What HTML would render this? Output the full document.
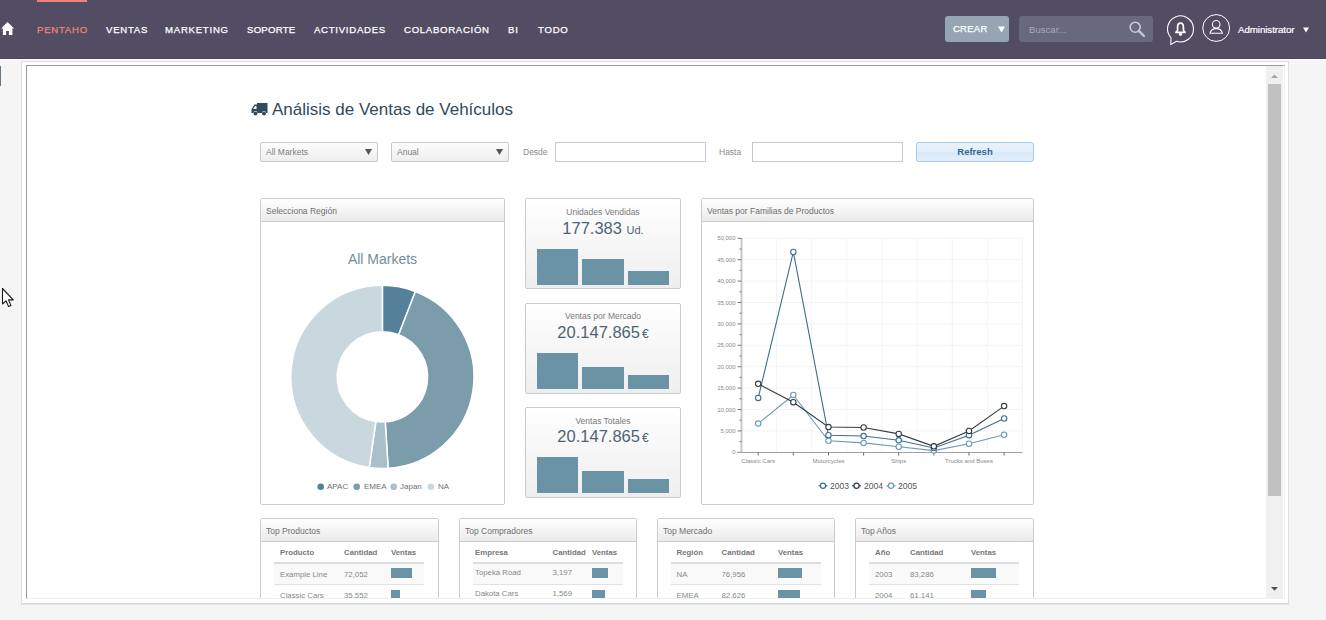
<!DOCTYPE html>
<html><head><meta charset="utf-8">
<style>
*{margin:0;padding:0;box-sizing:border-box}
html,body{width:1326px;height:620px;overflow:hidden;background:#f5f5f5;font-family:"Liberation Sans",sans-serif}
.abs{position:absolute}
#nav{position:absolute;left:0;top:0;width:1326px;height:59px;background:#534d64;border-bottom:1px solid #4b455b}
#wl{position:absolute;left:0;top:59px;width:1326px;height:1px;background:#fff}
.ni{position:absolute;top:24.2px;font-size:9.6px;-webkit-text-stroke:0.25px currentColor;color:#fff;letter-spacing:0.75px;white-space:nowrap;line-height:12px}
#outer{position:absolute;left:21px;top:61px;width:1268px;height:543px;background:#fff;border:1px solid #dedede;border-bottom-color:#cdd9e3;box-shadow:0 1px 0 #e4e4e4}
#frame{position:absolute;left:26px;top:65px;width:1259px;height:534px;border-top:1px solid #999;border-left:1px solid #999;border-right:1px solid #f0f0f0;border-bottom:1px solid #f0f0f0;background:#fff}

.sel{position:absolute;top:142px;height:20px;border:1px solid #c9c9c9;border-radius:2px;background:linear-gradient(#fdfdfd,#eeeeee)}
.sel span{position:absolute;left:5px;top:4px;font-size:8.5px;line-height:10px;color:#808080}
.sel svg{position:absolute;right:5px;top:6px}
.inp{position:absolute;top:142px;height:20px;border:1px solid #c9c9c9;background:#fff}
.lbl{position:absolute;top:147px;font-size:8.5px;line-height:10px;color:#8a8a8a}
.pan{position:absolute;border:1px solid #cdcdcd;border-radius:2px;background:#fff}
.ph{position:absolute;left:0;top:0;right:0;height:23px;border-bottom:1px solid #cdcdcd;background:linear-gradient(#ffffff,#ebebeb)}
.ph span{position:absolute;left:5px;top:7px;font-size:8.5px;line-height:10px;color:#6f6f6f;white-space:nowrap}
.kpi{position:absolute;left:525px;width:156px;height:91px;border:1px solid #cdcdcd;border-radius:2px;background:linear-gradient(#ffffff,#eeeeee)}
.kt{position:absolute;left:0;width:154px;text-align:center;font-size:8.5px;line-height:10px;color:#7a7a7a;white-space:nowrap}
.kv{position:absolute;left:0;width:154px;text-align:center;font-size:16.5px;line-height:18px;color:#4f6374;white-space:nowrap}
.kv small{font-size:11px}
.bar{position:absolute;background:#6b93a6}

.lg{top:482px;font-size:8px;line-height:10px;color:#707070}
.yl{left:700px;width:35.5px;text-align:right;font-size:6px;line-height:8px;color:#8a8a8a}
.xl{top:457px;width:60px;text-align:center;font-size:6px;line-height:8px;color:#8a8a8a;white-space:nowrap}
.cl{top:481px;font-size:8.6px;line-height:10px;color:#555}

.th{position:absolute;top:548px;font-size:7.8px;line-height:10px;font-weight:bold;color:#777;white-space:nowrap}
.td{position:absolute;font-size:7.8px;line-height:10px;color:#888;white-space:nowrap}
.tb{position:absolute;height:2px;top:562px;background:#dddddd}
.tr{position:absolute;height:21px;top:564px;background:#f9f9f9;border-bottom:1px solid #e2e2e2}
</style></head><body>
<div id="nav">
  <div class="abs" style="left:37px;top:0;width:50px;height:2px;background:#f08377"></div>
  <svg class="abs" style="left:1px;top:21px" width="14" height="15" viewBox="0 0 14 15"><path d="M6.5 0.9 L13.1 7.4 L11.4 7.4 L11.4 14.1 L7.9 14.1 L7.9 10.1 L5.1 10.1 L5.1 14.1 L1.9 14.1 L1.9 7.4 L0.1 7.4 Z" fill="#fff"/></svg>
  <div class="ni" style="left:37px;color:#f08377">PENTAHO</div>
  <div class="ni" style="left:106px">VENTAS</div>
  <div class="ni" style="left:165px">MARKETING</div>
  <div class="ni" style="left:247px;letter-spacing:0.25px">SOPORTE</div>
  <div class="ni" style="left:314px;letter-spacing:0.72px">ACTIVIDADES</div>
  <div class="ni" style="left:404px;letter-spacing:0.7px">COLABORACIÓN</div>
  <div class="ni" style="left:508px">BI</div>
  <div class="ni" style="left:538px">TODO</div>
  <div class="abs" style="left:945px;top:16px;width:64px;height:26px;background:#95a5b4;border-radius:3px"></div>
  <div class="ni" style="left:953px;top:23px;font-size:9.5px;letter-spacing:0.25px">CREAR</div>
  <svg class="abs" style="left:998px;top:26px" width="7" height="7" viewBox="0 0 7 7"><path d="M0 0.5 L7 0.5 L3.5 6.5 Z" fill="#fff"/></svg>
  <div class="abs" style="left:1019px;top:16px;width:134px;height:26px;background:#676a7c;border-radius:3px"></div>
  <div class="abs" style="left:1029px;top:24px;color:#a9a9b8;font-size:9.6px;line-height:12px">Buscar...</div>
  <svg class="abs" style="left:1128px;top:20px" width="20" height="20" viewBox="0 0 20 20"><circle cx="7.2" cy="7.2" r="5" fill="none" stroke="#c9c9d2" stroke-width="1.6"/><path d="M10.8 10.8 L16 16" stroke="#c9c9d2" stroke-width="2.4" stroke-linecap="round"/></svg>
  <svg class="abs" style="left:1164px;top:12px" width="34" height="36" viewBox="0 0 34 36"><path d="M12.48 29.26 A13 13 0 1 0 7.0 25.77 L6.8 32.6 Z" fill="none" stroke="#fff" stroke-width="1.1" stroke-linejoin="round"/><path d="M16.5 11.2 C14.5 11.2 13.6 12.9 13.6 15 L13.6 18.3 L11.9 20.3 L21.1 20.3 L19.4 18.3 L19.4 15 C19.4 12.9 18.5 11.2 16.5 11.2 Z" fill="none" stroke="#fff" stroke-width="1.7" stroke-linejoin="round"/><path d="M14.9 21.3 L18.1 21.3 L18.1 22.2 A1.6 1.6 0 0 1 14.9 22.2 Z" fill="#fff"/></svg>
  <svg class="abs" style="left:1200px;top:12px" width="32" height="32" viewBox="0 0 32 32"><circle cx="16.2" cy="16" r="13.4" fill="none" stroke="#fff" stroke-width="1"/><circle cx="16.2" cy="12.3" r="3.8" fill="none" stroke="#fff" stroke-width="1.1"/><path d="M10 21.3 C10.7 17.8 13.1 16.6 16.2 16.6 C19.3 16.6 21.7 17.8 22.4 21.3 Z" fill="none" stroke="#fff" stroke-width="1.1"/></svg>
  <div class="abs" style="left:1238px;top:24px;color:#fff;font-size:9.8px;line-height:12px;letter-spacing:-0.1px;-webkit-text-stroke:0.2px #fff">Administrator</div>
  <svg class="abs" style="left:1303px;top:27px" width="6" height="6" viewBox="0 0 6 6"><path d="M0 0.5 L6 0.5 L3 5.5 Z" fill="#fff"/></svg>
</div>
<div class="abs" style="left:0;top:66px;width:1px;height:20px;background:#667886"></div>
<div id="wl"></div>
<div id="outer"></div>
<div id="frame"></div>
<div id="clip" style="position:absolute;left:27px;top:66px;width:1239px;height:532px;overflow:hidden">
<div id="inner" style="position:absolute;left:-27px;top:-66px;width:1326px;height:620px">
  <svg class="abs" style="left:251px;top:102px" width="17" height="14" viewBox="0 0 17 14"><path d="M0.5 7 L3.5 2.5 L6 2.5 L6 1 L16.5 1 L16.5 11 L15 11 A2 2 0 0 0 11 11 L6.5 11 A2 2 0 0 0 2.5 11 L0.5 11 Z M2 7 L4.2 4 L5.5 4 L5.5 7 Z" fill="#2f4b5c" fill-rule="evenodd"/><circle cx="4.5" cy="11.5" r="1.9" fill="#2f4b5c"/><circle cx="13" cy="11.5" r="1.9" fill="#2f4b5c"/></svg>
  <div class="abs" style="left:272px;top:100px;font-size:17px;line-height:20px;color:#2f4b5c;white-space:nowrap">Análisis de Ventas de Vehículos</div>

  <div class="sel" style="left:260px;width:118px"><span>All Markets</span><svg width="7" height="6" viewBox="0 0 7 6"><path d="M0 0 L7 0 L3.5 6 Z" fill="#555"/></svg></div>
  <div class="sel" style="left:391px;width:118px"><span>Anual</span><svg width="7" height="6" viewBox="0 0 7 6"><path d="M0 0 L7 0 L3.5 6 Z" fill="#555"/></svg></div>
  <div class="lbl" style="left:523px">Desde</div>
  <div class="inp" style="left:555px;width:151px"></div>
  <div class="lbl" style="left:719px">Hasta</div>
  <div class="inp" style="left:752px;width:151px"></div>
  <div class="abs" style="left:916px;top:142px;width:118px;height:20px;border:1px solid #a9c9e6;border-radius:3px;background:linear-gradient(#e8f2fc 0%,#e2eefa 50%,#d9e9f8 52%,#e4f0fb 100%);text-align:center;font-size:9.5px;line-height:18px;font-weight:bold;color:#2f6898">Refresh</div>

  <div class="pan" style="left:260px;top:198px;width:245px;height:307px">
    <div class="ph"><span>Selecciona Región</span></div>
  </div>
  <div class="abs" style="left:260px;top:251px;width:245px;text-align:center;font-size:14px;line-height:16px;color:#6f8ea3">All Markets</div>
<svg class="abs" style="left:0;top:0" width="1326" height="620" viewBox="0 0 1326 620"><path d="M382.40 285.30 A91.6 91.6 0 0 1 415.38 291.44 L398.67 334.73 A45.2 45.2 0 0 0 382.40 331.70 Z" fill="#56819a" stroke="#fff" stroke-width="1.5" stroke-linejoin="round"/><path d="M415.38 291.44 A91.6 91.6 0 0 1 388.15 468.32 L385.24 422.01 A45.2 45.2 0 0 0 398.67 334.73 Z" fill="#7a9cab" stroke="#fff" stroke-width="1.5" stroke-linejoin="round"/><path d="M388.15 468.32 A91.6 91.6 0 0 1 369.18 467.54 L375.88 421.63 A45.2 45.2 0 0 0 385.24 422.01 Z" fill="#a9bfca" stroke="#fff" stroke-width="1.5" stroke-linejoin="round"/><path d="M369.18 467.54 A91.6 91.6 0 0 1 382.40 285.30 L382.40 331.70 A45.2 45.2 0 0 0 375.88 421.63 Z" fill="#c9d8df" stroke="#fff" stroke-width="1.5" stroke-linejoin="round"/><circle cx="320.7" cy="486.8" r="3.3" fill="#56819a"/><circle cx="356.7" cy="486.8" r="3.3" fill="#7a9cab"/><circle cx="393.7" cy="486.8" r="3.3" fill="#a9bfca"/><circle cx="431" cy="486.8" r="3.3" fill="#c9d8df"/></svg><div class="abs lg" style="left:327px">APAC</div><div class="abs lg" style="left:364px">EMEA</div><div class="abs lg" style="left:400px">Japan</div><div class="abs lg" style="left:438px">NA</div>

  <div class="kpi" style="top:198px"><div class="kt" style="top:206px;top:8px">Unidades Vendidas</div><div class="kv" style="top:20px">177.383 <small>Ud.</small></div></div>
  <div class="bar" style="left:537px;top:249px;width:41px;height:36px"></div>
  <div class="bar" style="left:582px;top:259px;width:42px;height:26px"></div>
  <div class="bar" style="left:628px;top:271px;width:41px;height:14px"></div>

  <div class="kpi" style="top:303px"><div class="kt" style="top:7px">Ventas por Mercado</div><div class="kv" style="top:18.5px">20.147.865<small style="font-size:12px;margin-left:2px">€</small></div></div>
  <div class="bar" style="left:537px;top:353px;width:41px;height:36px"></div>
  <div class="bar" style="left:582px;top:367px;width:42px;height:22px"></div>
  <div class="bar" style="left:628px;top:375px;width:41px;height:14px"></div>

  <div class="kpi" style="top:407px"><div class="kt" style="top:8px">Ventas Totales</div><div class="kv" style="top:18.5px">20.147.865<small style="font-size:12px;margin-left:2px">€</small></div></div>
  <div class="bar" style="left:537px;top:457px;width:41px;height:36px"></div>
  <div class="bar" style="left:582px;top:471px;width:42px;height:22px"></div>
  <div class="bar" style="left:628px;top:479px;width:41px;height:14px"></div>

  <div class="pan" style="left:701px;top:198px;width:333px;height:307px">
    <div class="ph"><span>Ventas por Familias de Productos</span></div>
  </div>
<svg class="abs" style="left:0;top:0" width="1326" height="620" viewBox="0 0 1326 620"><line x1="741.5" y1="238.3" x2="1022.5" y2="238.3" stroke="#f4f4f4" stroke-width="1"/><line x1="741.5" y1="259.7" x2="1022.5" y2="259.7" stroke="#f4f4f4" stroke-width="1"/><line x1="741.5" y1="281.1" x2="1022.5" y2="281.1" stroke="#f4f4f4" stroke-width="1"/><line x1="741.5" y1="302.5" x2="1022.5" y2="302.5" stroke="#f4f4f4" stroke-width="1"/><line x1="741.5" y1="323.9" x2="1022.5" y2="323.9" stroke="#f4f4f4" stroke-width="1"/><line x1="741.5" y1="345.3" x2="1022.5" y2="345.3" stroke="#f4f4f4" stroke-width="1"/><line x1="741.5" y1="366.7" x2="1022.5" y2="366.7" stroke="#f4f4f4" stroke-width="1"/><line x1="741.5" y1="388.1" x2="1022.5" y2="388.1" stroke="#f4f4f4" stroke-width="1"/><line x1="741.5" y1="409.5" x2="1022.5" y2="409.5" stroke="#f4f4f4" stroke-width="1"/><line x1="741.5" y1="430.9" x2="1022.5" y2="430.9" stroke="#f4f4f4" stroke-width="1"/><line x1="776.6" y1="238.3" x2="776.6" y2="452" stroke="#f4f4f4" stroke-width="1"/><line x1="811.7" y1="238.3" x2="811.7" y2="452" stroke="#f4f4f4" stroke-width="1"/><line x1="846.8" y1="238.3" x2="846.8" y2="452" stroke="#f4f4f4" stroke-width="1"/><line x1="881.9" y1="238.3" x2="881.9" y2="452" stroke="#f4f4f4" stroke-width="1"/><line x1="917.0" y1="238.3" x2="917.0" y2="452" stroke="#f4f4f4" stroke-width="1"/><line x1="952.2" y1="238.3" x2="952.2" y2="452" stroke="#f4f4f4" stroke-width="1"/><line x1="987.3" y1="238.3" x2="987.3" y2="452" stroke="#f4f4f4" stroke-width="1"/><line x1="1022.4" y1="238.3" x2="1022.4" y2="452" stroke="#f4f4f4" stroke-width="1"/><line x1="741.5" y1="238" x2="741.5" y2="452.5" stroke="#c8c8c8" stroke-width="2"/><line x1="737.5" y1="238.3" x2="741.5" y2="238.3" stroke="#777" stroke-width="1"/><line x1="739.5" y1="249.0" x2="741.5" y2="249.0" stroke="#777" stroke-width="1"/><line x1="737.5" y1="259.7" x2="741.5" y2="259.7" stroke="#777" stroke-width="1"/><line x1="739.5" y1="270.4" x2="741.5" y2="270.4" stroke="#777" stroke-width="1"/><line x1="737.5" y1="281.1" x2="741.5" y2="281.1" stroke="#777" stroke-width="1"/><line x1="739.5" y1="291.8" x2="741.5" y2="291.8" stroke="#777" stroke-width="1"/><line x1="737.5" y1="302.5" x2="741.5" y2="302.5" stroke="#777" stroke-width="1"/><line x1="739.5" y1="313.2" x2="741.5" y2="313.2" stroke="#777" stroke-width="1"/><line x1="737.5" y1="323.9" x2="741.5" y2="323.9" stroke="#777" stroke-width="1"/><line x1="739.5" y1="334.6" x2="741.5" y2="334.6" stroke="#777" stroke-width="1"/><line x1="737.5" y1="345.3" x2="741.5" y2="345.3" stroke="#777" stroke-width="1"/><line x1="739.5" y1="356.0" x2="741.5" y2="356.0" stroke="#777" stroke-width="1"/><line x1="737.5" y1="366.7" x2="741.5" y2="366.7" stroke="#777" stroke-width="1"/><line x1="739.5" y1="377.4" x2="741.5" y2="377.4" stroke="#777" stroke-width="1"/><line x1="737.5" y1="388.1" x2="741.5" y2="388.1" stroke="#777" stroke-width="1"/><line x1="739.5" y1="398.8" x2="741.5" y2="398.8" stroke="#777" stroke-width="1"/><line x1="737.5" y1="409.5" x2="741.5" y2="409.5" stroke="#777" stroke-width="1"/><line x1="739.5" y1="420.2" x2="741.5" y2="420.2" stroke="#777" stroke-width="1"/><line x1="737.5" y1="430.9" x2="741.5" y2="430.9" stroke="#777" stroke-width="1"/><line x1="739.5" y1="441.6" x2="741.5" y2="441.6" stroke="#777" stroke-width="1"/><line x1="737.5" y1="452.3" x2="741.5" y2="452.3" stroke="#777" stroke-width="1"/><line x1="737.5" y1="452.5" x2="1022.5" y2="452.5" stroke="#a0a0a0" stroke-width="1.2"/><line x1="758.2" y1="452.5" x2="758.2" y2="455.5" stroke="#666" stroke-width="1"/><line x1="793.3" y1="452.5" x2="793.3" y2="455.5" stroke="#666" stroke-width="1"/><line x1="828.5" y1="452.5" x2="828.5" y2="455.5" stroke="#666" stroke-width="1"/><line x1="863.6" y1="452.5" x2="863.6" y2="455.5" stroke="#666" stroke-width="1"/><line x1="898.7" y1="452.5" x2="898.7" y2="455.5" stroke="#666" stroke-width="1"/><line x1="933.9" y1="452.5" x2="933.9" y2="455.5" stroke="#666" stroke-width="1"/><line x1="969.0" y1="452.5" x2="969.0" y2="455.5" stroke="#666" stroke-width="1"/><line x1="1004.1" y1="452.5" x2="1004.1" y2="455.5" stroke="#666" stroke-width="1"/><polyline points="758.20,423.62 793.33,394.95 828.46,440.74 863.59,442.88 898.72,446.74 933.85,450.59 968.98,443.74 1004.11,434.75" fill="none" stroke="#6a9cb3" stroke-width="1.1"/><circle cx="758.20" cy="423.62" r="2.7" fill="#fff" stroke="#6a9cb3" stroke-width="1.1"/><circle cx="793.33" cy="394.95" r="2.7" fill="#fff" stroke="#6a9cb3" stroke-width="1.1"/><circle cx="828.46" cy="440.74" r="2.7" fill="#fff" stroke="#6a9cb3" stroke-width="1.1"/><circle cx="863.59" cy="442.88" r="2.7" fill="#fff" stroke="#6a9cb3" stroke-width="1.1"/><circle cx="898.72" cy="446.74" r="2.7" fill="#fff" stroke="#6a9cb3" stroke-width="1.1"/><circle cx="933.85" cy="450.59" r="2.7" fill="#fff" stroke="#6a9cb3" stroke-width="1.1"/><circle cx="968.98" cy="443.74" r="2.7" fill="#fff" stroke="#6a9cb3" stroke-width="1.1"/><circle cx="1004.11" cy="434.75" r="2.7" fill="#fff" stroke="#6a9cb3" stroke-width="1.1"/><polyline points="758.20,397.94 793.33,252.00 828.46,435.18 863.59,436.04 898.72,440.32 933.85,448.02 968.98,435.18 1004.11,418.49" fill="none" stroke="#3e6f8b" stroke-width="1.1"/><circle cx="758.20" cy="397.94" r="2.7" fill="#fff" stroke="#3e6f8b" stroke-width="1.1"/><circle cx="793.33" cy="252.00" r="2.7" fill="#fff" stroke="#3e6f8b" stroke-width="1.1"/><circle cx="828.46" cy="435.18" r="2.7" fill="#fff" stroke="#3e6f8b" stroke-width="1.1"/><circle cx="863.59" cy="436.04" r="2.7" fill="#fff" stroke="#3e6f8b" stroke-width="1.1"/><circle cx="898.72" cy="440.32" r="2.7" fill="#fff" stroke="#3e6f8b" stroke-width="1.1"/><circle cx="933.85" cy="448.02" r="2.7" fill="#fff" stroke="#3e6f8b" stroke-width="1.1"/><circle cx="968.98" cy="435.18" r="2.7" fill="#fff" stroke="#3e6f8b" stroke-width="1.1"/><circle cx="1004.11" cy="418.49" r="2.7" fill="#fff" stroke="#3e6f8b" stroke-width="1.1"/><polyline points="758.20,383.82 793.33,402.22 828.46,427.05 863.59,427.48 898.72,433.90 933.85,446.31 968.98,430.90 1004.11,406.08" fill="none" stroke="#333d44" stroke-width="1.1"/><circle cx="758.20" cy="383.82" r="2.7" fill="#fff" stroke="#333d44" stroke-width="1.1"/><circle cx="793.33" cy="402.22" r="2.7" fill="#fff" stroke="#333d44" stroke-width="1.1"/><circle cx="828.46" cy="427.05" r="2.7" fill="#fff" stroke="#333d44" stroke-width="1.1"/><circle cx="863.59" cy="427.48" r="2.7" fill="#fff" stroke="#333d44" stroke-width="1.1"/><circle cx="898.72" cy="433.90" r="2.7" fill="#fff" stroke="#333d44" stroke-width="1.1"/><circle cx="933.85" cy="446.31" r="2.7" fill="#fff" stroke="#333d44" stroke-width="1.1"/><circle cx="968.98" cy="430.90" r="2.7" fill="#fff" stroke="#333d44" stroke-width="1.1"/><circle cx="1004.11" cy="406.08" r="2.7" fill="#fff" stroke="#333d44" stroke-width="1.1"/><line x1="818.5" y1="485.8" x2="827.5" y2="485.8" stroke="#3e6f8b" stroke-width="1.2"/><circle cx="823" cy="485.8" r="2.6" fill="#fff" stroke="#3e6f8b" stroke-width="1.2"/><line x1="852.0" y1="485.8" x2="861.0" y2="485.8" stroke="#333d44" stroke-width="1.2"/><circle cx="856.5" cy="485.8" r="2.6" fill="#fff" stroke="#333d44" stroke-width="1.2"/><line x1="886.5" y1="485.8" x2="895.5" y2="485.8" stroke="#6a9cb3" stroke-width="1.2"/><circle cx="891" cy="485.8" r="2.6" fill="#fff" stroke="#6a9cb3" stroke-width="1.2"/></svg><div class="abs yl" style="top:234.3px">50,000</div><div class="abs yl" style="top:255.7px">45,000</div><div class="abs yl" style="top:277.1px">40,000</div><div class="abs yl" style="top:298.5px">35,000</div><div class="abs yl" style="top:319.9px">30,000</div><div class="abs yl" style="top:341.3px">25,000</div><div class="abs yl" style="top:362.7px">20,000</div><div class="abs yl" style="top:384.1px">15,000</div><div class="abs yl" style="top:405.5px">10,000</div><div class="abs yl" style="top:426.9px">5,000</div><div class="abs yl" style="top:448.3px">0</div><div class="abs xl" style="left:728.2px">Classic Cars</div><div class="abs xl" style="left:763.3px"><span style="font-size:4px;color:#bbb">·</span></div><div class="abs xl" style="left:798.5px">Motorcycles</div><div class="abs xl" style="left:833.6px"><span style="font-size:4px;color:#bbb">·</span></div><div class="abs xl" style="left:868.7px">Ships</div><div class="abs xl" style="left:903.9px"><span style="font-size:4px;color:#bbb">·</span></div><div class="abs xl" style="left:939.0px">Trucks and Buses</div><div class="abs xl" style="left:974.1px"><span style="font-size:4px;color:#bbb">·</span></div><div class="abs cl" style="left:830px">2003</div><div class="abs cl" style="left:864px">2004</div><div class="abs cl" style="left:898px">2005</div>

  <div class="pan" style="left:260px;top:518px;width:179px;height:120px"><div class="ph"><span>Top Productos</span></div></div>
  <div class="pan" style="left:459px;top:518px;width:178px;height:120px"><div class="ph"><span>Top Compradores</span></div></div>
  <div class="pan" style="left:657px;top:518px;width:178px;height:120px"><div class="ph"><span>Top Mercado</span></div></div>
  <div class="pan" style="left:855px;top:518px;width:179px;height:120px"><div class="ph"><span>Top Años</span></div></div>
<div class="tb" style="left:274px;width:150px"></div><div class="tr" style="left:274px;width:150px"></div><div class="th" style="left:280px">Producto</div><div class="th" style="left:344px">Cantidad</div><div class="th" style="left:391px">Ventas</div><div class="td" style="left:280px;top:570px">Example Line</div><div class="td" style="left:344px;top:570px">72,052</div><div class="bar" style="left:391px;top:568px;width:21px;height:10px"></div><div class="td" style="left:280px;top:591px">Classic Cars</div><div class="td" style="left:344px;top:591px">35,552</div><div class="bar" style="left:391px;top:590px;width:9px;height:10px"></div><div class="tb" style="left:473px;width:150px"></div><div class="tr" style="left:473px;width:150px"></div><div class="th" style="left:475px">Empresa</div><div class="th" style="left:552.5px">Cantidad</div><div class="th" style="left:592px">Ventas</div><div class="td" style="left:475px;top:568px">Topeka Road</div><div class="td" style="left:552.5px;top:568px">3,197</div><div class="bar" style="left:592px;top:568px;width:16px;height:10px"></div><div class="td" style="left:475px;top:589px">Dakota Cars</div><div class="td" style="left:552.5px;top:589px">1,569</div><div class="bar" style="left:592px;top:590px;width:13px;height:10px"></div><div class="tb" style="left:671px;width:150px"></div><div class="tr" style="left:671px;width:150px"></div><div class="th" style="left:676.5px">Región</div><div class="th" style="left:721.5px">Cantidad</div><div class="th" style="left:778px">Ventas</div><div class="td" style="left:676.5px;top:570px">NA</div><div class="td" style="left:721.5px;top:570px">76,956</div><div class="bar" style="left:778px;top:568px;width:24px;height:10px"></div><div class="td" style="left:676.5px;top:591px">EMEA</div><div class="td" style="left:721.5px;top:591px">82,626</div><div class="bar" style="left:778px;top:590px;width:22px;height:10px"></div><div class="tb" style="left:869px;width:150px"></div><div class="tr" style="left:869px;width:150px"></div><div class="th" style="left:875px">Año</div><div class="th" style="left:910px">Cantidad</div><div class="th" style="left:971px">Ventas</div><div class="td" style="left:875px;top:570px">2003</div><div class="td" style="left:910px;top:570px">83,286</div><div class="bar" style="left:971px;top:568px;width:25px;height:10px"></div><div class="td" style="left:875px;top:591px">2004</div><div class="td" style="left:910px;top:591px">61,141</div><div class="bar" style="left:971px;top:590px;width:15px;height:10px"></div>
</div></div>
<div class="abs" style="left:1266px;top:66px;width:17px;height:532px;background:#f0f0f0"></div>
<div class="abs" style="left:1268px;top:84px;width:13px;height:412px;background:#c1c1c1"></div>
<svg class="abs" style="left:1270px;top:73px" width="9" height="6" viewBox="0 0 9 6"><path d="M1 5 L8 5 L4.5 1.5 Z" fill="#a3a3a3"/></svg>
<svg class="abs" style="left:1270px;top:586px" width="9" height="6" viewBox="0 0 9 6"><path d="M1 1 L8 1 L4.5 4.8 Z" fill="#505050"/></svg>

<svg class="abs" style="left:1px;top:287px" width="16" height="22" viewBox="0 0 16 22"><path d="M1.5 1.5 L1.5 17 L5 13.8 L7.6 19.6 L10 18.6 L7.5 12.9 L12.2 12.9 Z" fill="#fff" stroke="#1a1a1a" stroke-width="1.1" stroke-linejoin="round"/></svg>
</body></html>
